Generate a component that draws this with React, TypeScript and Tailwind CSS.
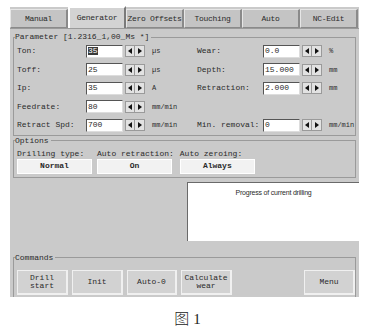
import React from "react";

const TABS = ["Manual", "Generator", "Zero Offsets", "Touching", "Auto", "NC-Edit"];

function Tab({ label, active }: { label: string; active?: boolean }) {
  return (
    <div
      className={
        active
          ? "w-[58px] h-[22px] flex items-center justify-center whitespace-nowrap tracking-[-0.3px] bg-[#d3d3d3] border-t-2 border-l-2 border-white border-r-2 border-r-[#7a7a7a]"
          : "w-[58px] h-[19px] flex items-center justify-center whitespace-nowrap tracking-[-0.3px] bg-[#c4c4c4] border-t border-l border-[#e6e6e6] border-r-2 border-r-[#8a8a8a] border-b border-b-[#8a8a8a]"
      }
    >
      {label}
    </div>
  );
}

function Arrows() {
  return (
    <div className="flex ml-[2px]">
      <div className="w-[10px] h-[12px] flex items-center justify-center bg-[#e2e2e2] border border-[#9a9a9a]">
        <svg width="4" height="6" viewBox="0 0 4 6">
          <polygon points="4,0 4,6 0,3" fill="#111" />
        </svg>
      </div>
      <div className="w-[10px] h-[12px] flex items-center justify-center bg-[#e2e2e2] border border-l-0 border-[#9a9a9a]">
        <svg width="4" height="6" viewBox="0 0 4 6">
          <polygon points="0,0 0,6 4,3" fill="#111" />
        </svg>
      </div>
    </div>
  );
}

function Field({
  label,
  value,
  unit,
  labelW,
  selected,
}: {
  label: string;
  value: string;
  unit: string;
  labelW: string;
  selected?: boolean;
}) {
  return (
    <div className="flex items-center h-full">
      <div className={labelW}>{label}</div>
      <div className="w-[37px] h-[13px] bg-white border-t border-l border-[#555] border-b border-r border-b-[#ddd] border-r-[#ddd] flex items-center pl-[1px] leading-none">
        {selected ? <span className="bg-[#3a3a3a] text-white">{value}</span> : value}
      </div>
      <Arrows />
      <div className="ml-[7px] text-[7px]">{unit}</div>
    </div>
  );
}

function Group({ title, className, children }: { title: string; className?: string; children: React.ReactNode }) {
  return (
    <fieldset className={"mx-[3px] border border-[#9a9a9a] pl-[3px] " + (className ?? "")}>
      <legend className="ml-[-2px] leading-[10px] pr-[2px]">{title}</legend>
      {children}
    </fieldset>
  );
}

function OptButton({ label }: { label: string }) {
  return (
    <div className="w-[75px] h-[15px] flex items-center justify-center bg-[#f2f2f2] border-t border-l border-white border-r border-b border-[#8a8a8a] font-bold">
      {label}
    </div>
  );
}

function CmdButton({ label, w = "w-[51px]" }: { label: React.ReactNode; w?: string }) {
  return (
    <div
      className={
        w +
        " h-[25px] flex items-center justify-center text-center leading-[8px] bg-[#d2d2d2] border-t border-l border-[#f0f0f0] border-r-2 border-b-2 border-[#8a8a8a]"
      }
    >
      {label}
    </div>
  );
}

function Row({ children }: { children: React.ReactNode }) {
  return <div className="flex h-[18.5px]">{children}</div>;
}

export default function App() {
  return (
    <div className="w-[375px] h-[335px] bg-white overflow-hidden">
      <div className="ml-[10px] pt-[7px]">
        <div className="w-[349px] h-[290px] bg-[#cacaca] flex flex-col font-['Liberation_Mono',monospace] text-[8px] text-[#2a2a2a]">
          {/* Tabs */}
          <div className="flex items-end h-[22px] border-b border-[#9a9a9a]">
            {TABS.map((t) => (
              <Tab key={t} label={t} active={t === "Generator"} />
            ))}
          </div>

          {/* Parameter */}
          <Group title="Parameter [1.2316_1,00_Ms *]" className="mt-[3px]">
            <div className="flex flex-col">
              <Row>
                <div className="w-[180px]">
                  <Field label="Ton:" value="35" unit="µs" labelW="w-[69px]" selected />
                </div>
                <Field label="Wear:" value="0.0" unit="%" labelW="w-[66px]" />
              </Row>
              <Row>
                <div className="w-[180px]">
                  <Field label="Toff:" value="25" unit="µs" labelW="w-[69px]" />
                </div>
                <Field label="Depth:" value="15.000" unit="mm" labelW="w-[66px]" />
              </Row>
              <Row>
                <div className="w-[180px]">
                  <Field label="Ip:" value="35" unit="A" labelW="w-[69px]" />
                </div>
                <Field label="Retraction:" value="2.000" unit="mm" labelW="w-[66px]" />
              </Row>
              <Row>
                <div className="w-[180px]">
                  <Field label="Feedrate:" value="80" unit="mm/min" labelW="w-[69px]" />
                </div>
              </Row>
              <Row>
                <div className="w-[180px]">
                  <Field label="Retract Spd:" value="700" unit="mm/min" labelW="w-[69px]" />
                </div>
                <Field label="Min. removal:" value="0" unit="mm/min" labelW="w-[66px]" />
              </Row>
            </div>
          </Group>

          {/* Options */}
          <Group title="Options" className="pb-[3px]">
            <div className="flex gap-[5px] pt-[2px]">
              <div className="flex flex-col">
                <div className="h-[11px]">Drilling type:</div>
                <OptButton label="Normal" />
              </div>
              <div className="flex flex-col">
                <div className="h-[11px] whitespace-nowrap">Auto retraction:</div>
                <OptButton label="On" />
              </div>
              <div className="flex flex-col ml-[1px]">
                <div className="h-[11px]">Auto zeroing:</div>
                <OptButton label="Always" />
              </div>
            </div>
          </Group>

          {/* Progress */}
          <div className="mt-[4px] ml-auto w-[172px] h-[59px] bg-white border-t border-l border-[#6a6a6a] font-['Liberation_Sans',sans-serif] text-[7px] text-center pt-[5px] tracking-[-0.2px]">
            Progress of current drilling
          </div>

          {/* Commands */}
          <Group title="Commands" className="mt-[12px] border-b-0 flex-1">
            <div className="flex pt-[7px]">
              <div className="flex gap-[4px]">
                <CmdButton label={<>Drill<br />start</>} />
                <CmdButton label="Init" />
                <CmdButton label="Auto-0" w="w-[50px]" />
                <CmdButton label={<>Calculate<br />wear</>} />
              </div>
              <div className="ml-auto">
                <CmdButton label="Menu" />
              </div>
            </div>
          </Group>
        </div>
      </div>

      {/* Caption */}
      <div className="mt-[10px] text-center text-[15px] text-[#222] font-['Liberation_Serif','Noto_Sans_CJK_SC',serif]">
        <span className="font-['Noto_Sans_CJK_SC',serif] font-light">图</span> 1
      </div>
    </div>
  );
}
